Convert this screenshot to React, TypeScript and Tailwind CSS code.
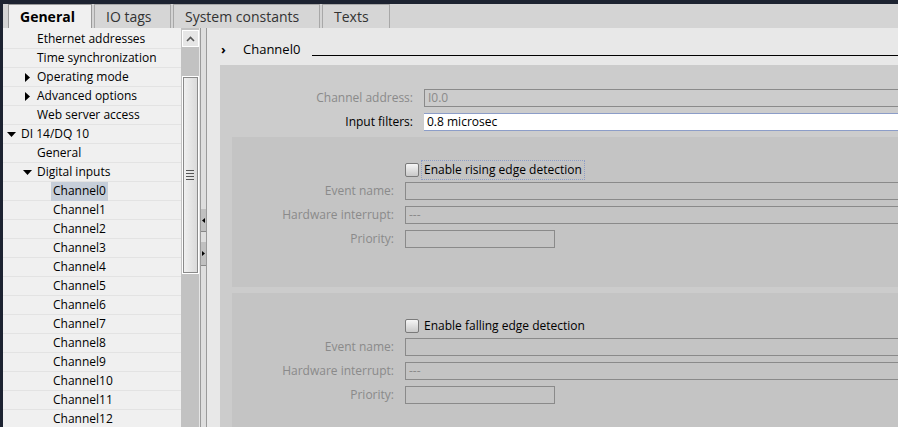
import React from "react";

type TreeRow = {
  label: string;
  level: 1 | 2 | 3;
  arrow?: "right" | "down";
  selected?: boolean;
};

const rows: TreeRow[] = [
  { label: "Ethernet addresses", level: 2 },
  { label: "Time synchronization", level: 2 },
  { label: "Operating mode", level: 2, arrow: "right" },
  { label: "Advanced options", level: 2, arrow: "right" },
  { label: "Web server access", level: 2 },
  { label: "DI 14/DQ 10", level: 1, arrow: "down" },
  { label: "General", level: 2 },
  { label: "Digital inputs", level: 2, arrow: "down" },
  ...Array.from({ length: 13 }, (_, i) => ({
    label: `Channel${i}`,
    level: 3 as const,
    selected: i === 0,
  })),
];

const tabs = [
  { label: "General", w: "w-[84px]", active: true },
  { label: "IO tags", w: "w-[77px]" },
  { label: "System constants", w: "w-[147px]" },
  { label: "Texts", w: "w-[68px]" },
];

// small black triangles used in the tree
const Arrow = ({ dir }: { dir: "right" | "down" }) =>
  dir === "right" ? (
    <svg width="5" height="9" viewBox="0 0 5 9" className="flex-none">
      <path d="M0 0 L5 4.5 L0 9 Z" fill="#000" />
    </svg>
  ) : (
    <svg width="9" height="5" viewBox="0 0 9 5" className="flex-none">
      <path d="M0 0 L9 0 L4.5 5 Z" fill="#000" />
    </svg>
  );

const Row = ({ row }: { row: TreeRow }) => {
  // left offsets of arrow and text per level
  let arrowBox = "";
  if (row.level === 1) {
    arrowBox = "w-[16px] pl-[4px]";
  } else if (row.level === 2) {
    arrowBox = row.arrow === "down" ? "w-[32px] pl-[20px]" : "w-[32px] pl-[22px]";
  } else {
    arrowBox = "w-[48px]";
  }
  return (
    <div className="h-[19px] flex items-center border-b border-[#e3e3e3] text-[12px] text-black whitespace-nowrap">
      <div className={`${arrowBox} flex-none flex items-center`}>
        {row.arrow && <Arrow dir={row.arrow} />}
      </div>
      <span
        className={
          row.selected
            ? "bg-[#c6ced9] px-[2px] h-[19px] flex items-center"
            : "px-[2px]"
        }
      >
        {row.label}
      </span>
    </div>
  );
};

const Field = ({ label, value, white, short, labelW }: { label: string; value?: string; white?: boolean; short?: boolean; labelW: string }) => (
  <div className="flex items-center h-[18px]">
    <div className={`${labelW} flex-none text-right pr-[11px] ${white ? "text-black" : "text-[#8a8a8a]"}`}>
      {label}
    </div>
    <div
      className={
        white
          ? "flex-1 h-[18px] bg-white border-y border-[#8c9dc8] px-[3px] flex items-center text-black"
          : `${short ? "w-[150px]" : "flex-1"} h-[18px] border border-[#8a8a8a] px-[3px] flex items-center text-[#8a8a8a]`
      }
    >
      {value}
    </div>
  </div>
);

const Checkbox = () => (
  <div className="w-[14px] h-[14px] rounded-[2px] border border-[#7a7a7a] bg-gradient-to-b from-[#f6f6f6] to-[#c9c9c9] flex-none" />
);

const Group = ({ title, focus }: { title: string; focus?: boolean }) => (
  <div className="bg-[#c4c4c4] h-[150px] ml-[12px] pt-[24px] flex flex-col">
    <div className="flex items-center h-[18px]">
      <div className="w-[173px] flex-none" />
      <Checkbox />
      <span
        className={`ml-[3px] px-[2px] text-black ${
          focus ? "outline outline-1 outline-dotted outline-[#8c9dc8]" : ""
        }`}
      >
        {title}
      </span>
    </div>
    <div className="mt-[3px] flex flex-col gap-[6px]">
      <Field label="Event name:" labelW="w-[173px]" />
      <Field label="Hardware interrupt:" value="---" labelW="w-[173px]" />
      <Field label="Priority:" short labelW="w-[173px]" />
    </div>
  </div>
);

export default function App() {
  return (
    <div
      className="w-[898px] h-[427px] bg-[#1d2331] overflow-hidden flex flex-col pt-[4px] pl-[3px]"
      style={{ fontFamily: "'Open Sans', 'Noto Sans', sans-serif" }}
    >
      {/* tab strip */}
      <div className="h-[24px] flex-none flex bg-[#d4d4d4] pl-[5px] gap-[2px] border-b border-[#d4d4d4]">
        {tabs.map((t) => (
          <div
            key={t.label}
            className={`${t.w} h-[24px] flex items-center pl-[11px] text-[14px] border-x border-t whitespace-nowrap ${
              t.active
                ? "bg-[#f0f0f0] border-[#9a9a9a] font-bold text-black"
                : "bg-[#d6d6d6] border-[#a8a8a8] text-[#333]"
            }`}
          >
            {t.label}
          </div>
        ))}
      </div>

      <div className="flex flex-1 min-h-0">
        {/* project tree */}
        <div className="w-[178px] flex-none bg-[#f0f0f0] overflow-hidden pt-[2px]">
          {rows.map((r) => (
            <Row key={r.label} row={r} />
          ))}
        </div>

        {/* scrollbar */}
        <div className="w-[18px] flex-none bg-[#c2c2c2] flex flex-col items-center pt-[2px]">
          <div className="w-[17px] h-[17px] border border-white bg-[#e6e6e6] flex items-center justify-center">
            <svg width="9" height="6" viewBox="0 0 9 6">
              <path d="M1 5 L4.5 1.5 L8 5" stroke="#555" strokeWidth="1.6" fill="none" />
            </svg>
          </div>
          <div className="mt-[29px] w-[17px] h-[198px] border border-white outline outline-1 outline-[#8a8a8a] -outline-offset-2 bg-gradient-to-r from-[#f2f2f2] to-[#d8d8d8] flex items-center justify-center">
            <div className="flex flex-col gap-[2px]">
              <div className="w-[8px] h-[1px] bg-[#555]" />
              <div className="w-[8px] h-[1px] bg-[#555]" />
              <div className="w-[8px] h-[1px] bg-[#555]" />
              <div className="w-[8px] h-[1px] bg-[#555]" />
            </div>
          </div>
        </div>

        {/* splitter */}
        <div className="w-[1px] flex-none bg-[#e6e6e6]" />
        <div className="w-[7px] flex-none bg-[#dedede] border-x border-[#9a9a9a] flex flex-col">
          <div className="h-[181px]" />
          <div className="h-[23px] bg-[#c0c0c0] border-b border-[#888] flex items-center justify-center">
            <svg width="3" height="5" viewBox="0 0 3 5">
              <path d="M3 0 L0 2.5 L3 5 Z" fill="#000" />
            </svg>
          </div>
          <div className="h-[10px]" />
          <div className="h-[24px] bg-[#c0c0c0] border-b border-[#888] flex items-center justify-center">
            <svg width="3" height="5" viewBox="0 0 3 5">
              <path d="M0 0 L3 2.5 L0 5 Z" fill="#000" />
            </svg>
          </div>
        </div>

        {/* inspector */}
        <div className="flex-1 min-w-0 bg-[#e8e8e8] overflow-hidden flex flex-col text-[12px]">
          <div className="h-[37px] flex-none flex items-end pb-[8px] pl-[14px]">
            <span className="text-[13px] font-bold w-[22px] leading-[15px]">›</span>
            <span className="text-[13px] text-black leading-[15px]">Channel0</span>
            <div className="flex-1 ml-[12px] h-[1px] bg-black mb-[1px]" />
          </div>
          <div className="ml-[13px] w-[720px] flex-1 bg-[#cccccc] pt-[24px] flex flex-col">
            <Field label="Channel address:" value="I0.0" labelW="w-[204px]" />
            <div className="mt-[6px]">
              <Field label="Input filters:" value="0.8 microsec" white labelW="w-[204px]" />
            </div>
            <div className="mt-[6px] flex flex-col gap-[6px]">
              <Group title="Enable rising edge detection" focus />
              <Group title="Enable falling edge detection" />
            </div>
          </div>
        </div>
      </div>
    </div>
  );
}
